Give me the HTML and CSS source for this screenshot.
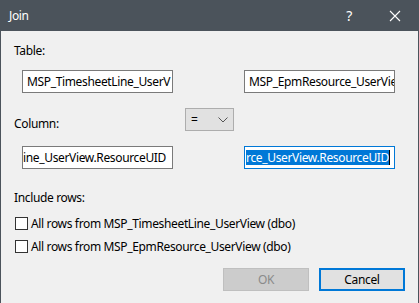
FILE: index.html
```html
<!DOCTYPE html>
<html lang="en">
<head>
    <meta charset="UTF-8">
    <title>Join</title>
    <link rel="stylesheet" href="styles.css">
</head>
<body>
    <div class="window">
        <!-- Title bar -->
        <div class="titlebar">
            <span class="title">Join</span>
            <span class="caption-btn help">?</span>
            <span class="caption-btn">
                <svg width="12" height="12" viewBox="0 0 12 12"><path d="M1 1L11 11M11 1L1 11" stroke="#fff" stroke-width="1.1"/></svg>
            </span>
        </div>

        <!-- Dialog body -->
        <div class="content">
            <div class="label">Table:</div>
            <div class="pair tables">
                <div class="textbox"><span>MSP_TimesheetLine_UserV</span></div>
                <div class="textbox"><span>MSP_EpmResource_UserVie</span></div>
            </div>

            <div class="column-row">
                <div class="label">Column:</div>
                <div class="combo">
                    <span>=</span>
                    <svg width="10" height="6" viewBox="0 0 10 6"><path d="M0.5 0.5L5 5L9.5 0.5" fill="none" stroke="#555" stroke-width="1"/></svg>
                </div>
            </div>
            <div class="pair columns">
                <div class="textbox end"><span>ine_UserView.ResourceUID</span></div>
                <div class="textbox end focused"><span class="selected">rce_UserView.ResourceUID</span><i class="caret"></i></div>
            </div>

            <div class="label include">Include rows:</div>
            <label class="check first"><span class="box"></span>All rows from MSP_TimesheetLine_UserView (dbo)</label>
            <label class="check"><span class="box"></span>All rows from MSP_EpmResource_UserView (dbo)</label>

            <div class="buttons">
                <button class="btn" disabled>OK</button>
                <button class="btn default">Cancel</button>
            </div>
        </div>
    </div>
</body>
</html>
```

FILE: styles.css
```css
body {
    margin: 0;
    background: #f0f0f0;
    font-family: "Noto Sans", "Open Sans", sans-serif;
    font-size: 12px;
    letter-spacing: -0.35px;
    color: #000;
}
.window {
    width: 417px;
    height: 303px;
    border-left: 1px solid #4b535b;
    border-right: 1px solid #4b535b;
    background: #f0f0f0;
    overflow: hidden;
}
.titlebar {
    height: 31px;
    background: #4b535b;
    color: #fff;
    display: flex;
    align-items: center;
}
.title {
    flex: 1;
    padding-left: 8px;
    line-height: 31px;
}
.caption-btn {
    width: 46px;
    height: 31px;
    display: flex;
    align-items: center;
    justify-content: center;
}
.help {
    font-size: 14px;
}
.content {
    padding: 12px 0 0 13px;
}
.label {
    line-height: 16px;
    height: 16px;
}
.pair {
    display: flex;
    gap: 71px;
    margin-left: 8px;
}
.tables {
    margin-top: 11px;
}
.textbox {
    box-sizing: border-box;
    width: 151px;
    height: 23px;
    border: 1px solid #7a7a7a;
    background: #fff;
    padding: 0 4px;
    display: flex;
    align-items: center;
    overflow: hidden;
    white-space: nowrap;
    line-height: 15px;
}
.textbox.end {
    justify-content: flex-end;
    padding-right: 6px;
}
.textbox.focused {
    border-color: #0078d7;
    padding-right: 4px;
}
.selected {
    background: #0078d7;
    color: #fff;
}
.caret {
    width: 1px;
    height: 15px;
    background: #000;
    flex-shrink: 0;
}
.column-row {
    display: flex;
    align-items: flex-start;
    margin-top: 15px;
}
.column-row .label {
    margin-top: 8px;
    width: 171px;
}
.combo {
    box-sizing: border-box;
    width: 49px;
    height: 23px;
    border: 1px solid #adadad;
    background: #e1e1e1;
    display: flex;
    align-items: center;
    justify-content: space-between;
    padding: 0 5px 0 5px;
}
.columns {
    margin-top: 14px;
}
.include {
    margin-top: 21px;
}
.check {
    display: flex;
    align-items: center;
    height: 16px;
    margin-top: 7px;
    white-space: nowrap;
}
.check.first {
    margin-top: 9px;
}
.box {
    box-sizing: border-box;
    width: 13px;
    height: 13px;
    border: 1px solid #333;
    background: #fff;
    margin-left: 1px;
    margin-right: 3px;
}
.buttons {
    display: flex;
    justify-content: flex-end;
    gap: 10px;
    margin-top: 14px;
    padding-right: 13px;
}
.btn {
    box-sizing: border-box;
    width: 86px;
    height: 23px;
    font-family: inherit;
    font-size: 12px;
    letter-spacing: inherit;
    border: 1px solid #adadad;
    background: #e1e1e1;
    color: #000;
    padding: 0;
}
.btn:disabled {
    background: #cccccc;
    border-color: #bfbfbf;
    color: #8a8a8a;
}
.btn.default {
    border: 2px solid #0078d7;
}
```
